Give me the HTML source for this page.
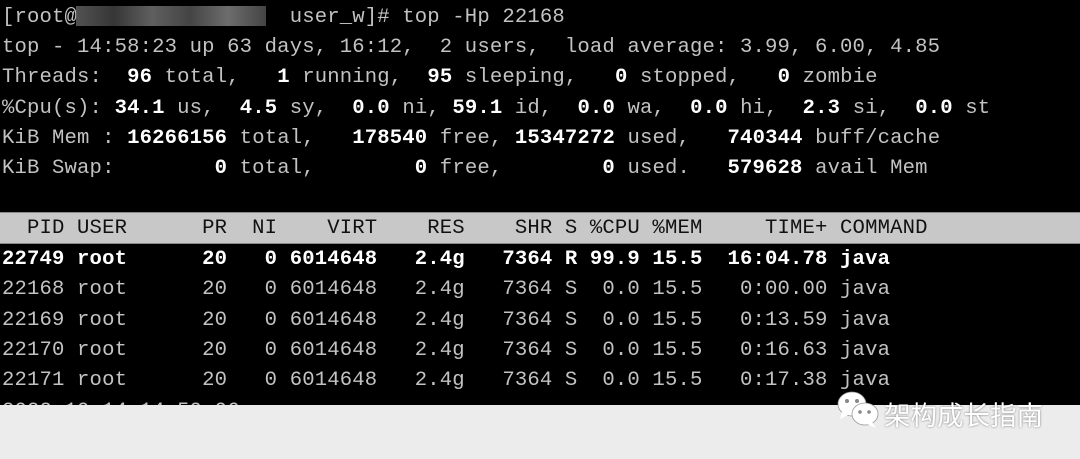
<!DOCTYPE html>
<html><head><meta charset="utf-8"><style>
html,body{margin:0;padding:0;width:1080px;height:459px;overflow:hidden;background:#ececec}
.term{position:absolute;left:0;top:0;width:1080px;height:405px;background:#000;overflow:hidden}
.l{position:absolute;left:2px;white-space:pre;font-family:"Liberation Mono",monospace;font-size:20.6px;line-height:30px;color:#c2c2c2;letter-spacing:0.15px}
b{color:#fff;font-weight:bold}
.hdr{position:absolute;left:0;top:212px;width:1080px;height:32px;background:#c8c8c8;border-top:1px solid #888;border-bottom:1px solid #888;box-sizing:border-box}
.hl{color:#111}
.w{color:#fff;font-weight:bold}
.blur{position:absolute;left:76px;top:6px;width:190px;height:20px;background:linear-gradient(90deg,#666,#444 20%,#777 40%,#555 60%,#888 80%,#555);opacity:.8}
.wm{position:absolute;left:884px;top:394px;font-family:"Liberation Sans","Noto Sans CJK SC",sans-serif;font-size:26.5px;color:#fff;text-shadow:0 0 2px rgba(0,0,0,.5)}
</style></head><body>
<div class="term">
<div class="l" style="top:3px">[root@                 user_w]# top -Hp 22168</div>
<div class="blur"></div>
<div class="l" style="top:33px">top - 14:58:23 up 63 days, 16:12,  2 users,  load average: 3.99, 6.00, 4.85</div>
<div class="l" style="top:63px">Threads:  <b>96</b> total,   <b>1</b> running,  <b>95</b> sleeping,   <b>0</b> stopped,   <b>0</b> zombie</div>
<div class="l" style="top:94px">%Cpu(s): <b>34.1</b> us,  <b>4.5</b> sy,  <b>0.0</b> ni, <b>59.1</b> id,  <b>0.0</b> wa,  <b>0.0</b> hi,  <b>2.3</b> si,  <b>0.0</b> st</div>
<div class="l" style="top:124px">KiB Mem : <b>16266156</b> total,   <b>178540</b> free, <b>15347272</b> used,   <b>740344</b> buff/cache</div>
<div class="l" style="top:154px">KiB Swap:        <b>0</b> total,        <b>0</b> free,        <b>0</b> used.   <b>579628</b> avail Mem</div>
<div class="hdr"></div>
<div class="l hl" style="top:214px">  PID USER      PR  NI    VIRT    RES    SHR S %CPU %MEM     TIME+ COMMAND</div>
<div class="l w" style="top:245px">22749 root      20   0 6014648   2.4g   7364 R 99.9 15.5  16:04.78 java</div>
<div class="l" style="top:275px">22168 root      20   0 6014648   2.4g   7364 S  0.0 15.5   0:00.00 java</div>
<div class="l" style="top:306px">22169 root      20   0 6014648   2.4g   7364 S  0.0 15.5   0:13.59 java</div>
<div class="l" style="top:336px">22170 root      20   0 6014648   2.4g   7364 S  0.0 15.5   0:16.63 java</div>
<div class="l" style="top:366px">22171 root      20   0 6014648   2.4g   7364 S  0.0 15.5   0:17.38 java</div>
<div class="l" style="top:397px">2022-10-14 14:59:06</div>
</div>
<svg style="position:absolute;left:836px;top:390px" width="46" height="40" viewBox="0 0 46 40">
<ellipse cx="16" cy="14" rx="14" ry="12" fill="#fff" stroke="#999" stroke-width="0.8"/>
<path d="M6 22 L4 29 L12 25Z" fill="#fff"/>
<circle cx="11" cy="11" r="2" fill="#888"/><circle cx="21" cy="11" r="2" fill="#888"/>
<ellipse cx="29" cy="24" rx="13" ry="11" fill="#fff" stroke="#999" stroke-width="0.8"/>
<path d="M36 32 L40 38 L31 34Z" fill="#fff"/>
<circle cx="24" cy="22" r="1.8" fill="#888"/><circle cx="33" cy="22" r="1.8" fill="#888"/>
</svg>
<div class="wm">架构成长指南</div>
</body></html>
